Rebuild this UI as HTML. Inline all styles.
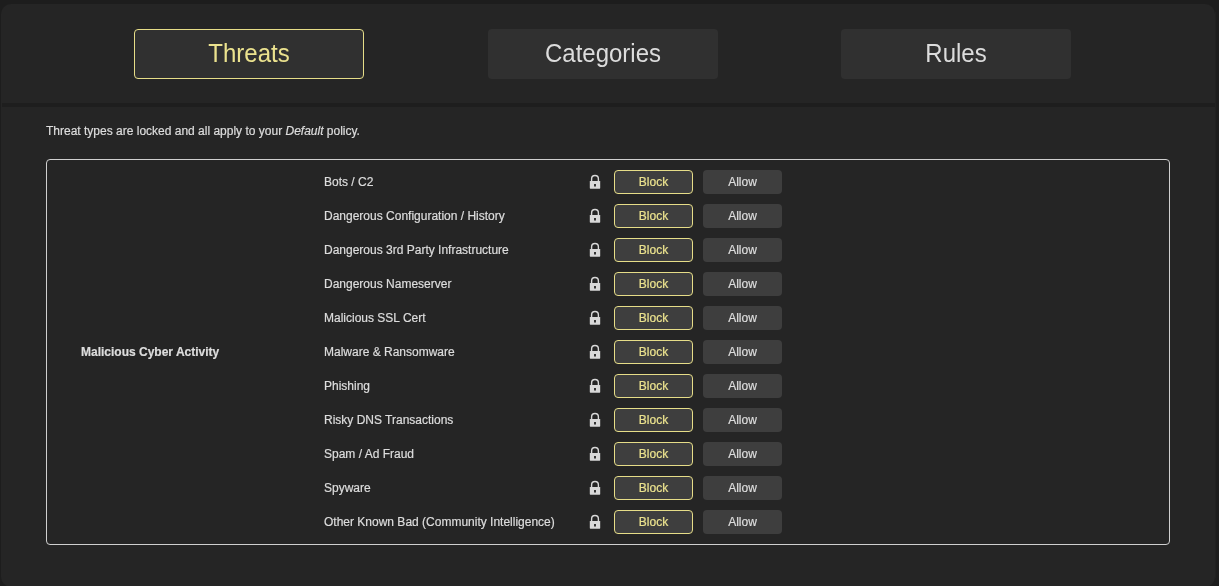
<!DOCTYPE html>
<html><head><meta charset="utf-8"><style>
*{margin:0;padding:0;box-sizing:border-box}
html,body{width:1219px;height:586px;overflow:hidden;background:#1d1d1d}
body{will-change:transform;-webkit-text-stroke:0.2px currentColor;font-family:"Liberation Sans",sans-serif;color:#e0e0e0;position:relative}
.card{position:absolute;left:1px;top:4px;width:1214px;height:583px;background:#252525;border-radius:10px}
.band{position:absolute;left:2px;top:103px;width:1213px;height:4px;background:#1e1e1e}
.tab{position:absolute;top:29px;width:230px;height:50px;background:#303030;border-radius:4px}
.tab span{-webkit-text-stroke:0;position:absolute;left:0;right:0;top:-1px;text-align:center;font-size:25px;line-height:50px;color:#dcdcdc;transform:scaleX(0.96)}
.tab.act{border:1px solid #e6dd88}
.tab.act span{color:#ebe28e;line-height:48px}
.note{position:absolute;left:46px;top:123px;font-size:12px;line-height:16px;color:#dddddd}
.tbl{position:absolute;left:46px;top:159px;width:1124px;height:386px;border:1px solid #d0d0d0;border-radius:4px}
.cat{position:absolute;left:81px;top:344px;font-size:12px;line-height:16px;font-weight:bold;color:#dddddd}
.row{position:absolute;left:0;width:1219px;height:24px}
.lbl{position:absolute;left:324px;top:4px;font-size:12px;line-height:16px;color:#dddddd;white-space:nowrap}
.lk{position:absolute;left:586px;top:2px}
.btn{position:absolute;top:0;width:79px;height:24px;border-radius:4px;background:#3e3e3e;font-size:12px;text-align:center;line-height:24px;color:#dddddd}
.blk{left:614px;border:1px solid #e6dd88;color:#ebe28e;line-height:22px}
.alw{left:703px}
</style></head><body>
<div class="card"></div>
<div class="band"></div>
<div style="position:absolute;left:1215px;top:12px;width:1px;height:566px;background:#212121"></div>
<div class="tab act" style="left:134px"><span>Threats</span></div>
<div class="tab" style="left:488px"><span>Categories</span></div>
<div class="tab" style="left:841px"><span>Rules</span></div>
<div class="note">Threat types are locked and all apply to your <i>Default</i> policy.</div>
<div class="tbl"></div>
<div class="cat">Malicious Cyber Activity</div>
<div class="row" style="top:170px"><span class="lbl">Bots / C2</span><svg class="lk" width="18" height="20" viewBox="0 0 18 20"><path d="M5.6 9.2 V6.9 A3.4 3.4 0 0 1 12.4 6.9 V9.2" fill="none" stroke="#d8d8d8" stroke-width="1.4"/><rect x="3.8" y="9" width="10.4" height="7.7" rx="0.6" fill="#d8d8d8"/><path d="M8.1 12 h1.8 v2.4 h-1.8z" fill="#222"/></svg><div class="btn blk">Block</div><div class="btn alw">Allow</div></div>
<div class="row" style="top:204px"><span class="lbl">Dangerous Configuration / History</span><svg class="lk" width="18" height="20" viewBox="0 0 18 20"><path d="M5.6 9.2 V6.9 A3.4 3.4 0 0 1 12.4 6.9 V9.2" fill="none" stroke="#d8d8d8" stroke-width="1.4"/><rect x="3.8" y="9" width="10.4" height="7.7" rx="0.6" fill="#d8d8d8"/><path d="M8.1 12 h1.8 v2.4 h-1.8z" fill="#222"/></svg><div class="btn blk">Block</div><div class="btn alw">Allow</div></div>
<div class="row" style="top:238px"><span class="lbl">Dangerous 3rd Party Infrastructure</span><svg class="lk" width="18" height="20" viewBox="0 0 18 20"><path d="M5.6 9.2 V6.9 A3.4 3.4 0 0 1 12.4 6.9 V9.2" fill="none" stroke="#d8d8d8" stroke-width="1.4"/><rect x="3.8" y="9" width="10.4" height="7.7" rx="0.6" fill="#d8d8d8"/><path d="M8.1 12 h1.8 v2.4 h-1.8z" fill="#222"/></svg><div class="btn blk">Block</div><div class="btn alw">Allow</div></div>
<div class="row" style="top:272px"><span class="lbl">Dangerous Nameserver</span><svg class="lk" width="18" height="20" viewBox="0 0 18 20"><path d="M5.6 9.2 V6.9 A3.4 3.4 0 0 1 12.4 6.9 V9.2" fill="none" stroke="#d8d8d8" stroke-width="1.4"/><rect x="3.8" y="9" width="10.4" height="7.7" rx="0.6" fill="#d8d8d8"/><path d="M8.1 12 h1.8 v2.4 h-1.8z" fill="#222"/></svg><div class="btn blk">Block</div><div class="btn alw">Allow</div></div>
<div class="row" style="top:306px"><span class="lbl">Malicious SSL Cert</span><svg class="lk" width="18" height="20" viewBox="0 0 18 20"><path d="M5.6 9.2 V6.9 A3.4 3.4 0 0 1 12.4 6.9 V9.2" fill="none" stroke="#d8d8d8" stroke-width="1.4"/><rect x="3.8" y="9" width="10.4" height="7.7" rx="0.6" fill="#d8d8d8"/><path d="M8.1 12 h1.8 v2.4 h-1.8z" fill="#222"/></svg><div class="btn blk">Block</div><div class="btn alw">Allow</div></div>
<div class="row" style="top:340px"><span class="lbl">Malware &amp; Ransomware</span><svg class="lk" width="18" height="20" viewBox="0 0 18 20"><path d="M5.6 9.2 V6.9 A3.4 3.4 0 0 1 12.4 6.9 V9.2" fill="none" stroke="#d8d8d8" stroke-width="1.4"/><rect x="3.8" y="9" width="10.4" height="7.7" rx="0.6" fill="#d8d8d8"/><path d="M8.1 12 h1.8 v2.4 h-1.8z" fill="#222"/></svg><div class="btn blk">Block</div><div class="btn alw">Allow</div></div>
<div class="row" style="top:374px"><span class="lbl">Phishing</span><svg class="lk" width="18" height="20" viewBox="0 0 18 20"><path d="M5.6 9.2 V6.9 A3.4 3.4 0 0 1 12.4 6.9 V9.2" fill="none" stroke="#d8d8d8" stroke-width="1.4"/><rect x="3.8" y="9" width="10.4" height="7.7" rx="0.6" fill="#d8d8d8"/><path d="M8.1 12 h1.8 v2.4 h-1.8z" fill="#222"/></svg><div class="btn blk">Block</div><div class="btn alw">Allow</div></div>
<div class="row" style="top:408px"><span class="lbl">Risky DNS Transactions</span><svg class="lk" width="18" height="20" viewBox="0 0 18 20"><path d="M5.6 9.2 V6.9 A3.4 3.4 0 0 1 12.4 6.9 V9.2" fill="none" stroke="#d8d8d8" stroke-width="1.4"/><rect x="3.8" y="9" width="10.4" height="7.7" rx="0.6" fill="#d8d8d8"/><path d="M8.1 12 h1.8 v2.4 h-1.8z" fill="#222"/></svg><div class="btn blk">Block</div><div class="btn alw">Allow</div></div>
<div class="row" style="top:442px"><span class="lbl">Spam / Ad Fraud</span><svg class="lk" width="18" height="20" viewBox="0 0 18 20"><path d="M5.6 9.2 V6.9 A3.4 3.4 0 0 1 12.4 6.9 V9.2" fill="none" stroke="#d8d8d8" stroke-width="1.4"/><rect x="3.8" y="9" width="10.4" height="7.7" rx="0.6" fill="#d8d8d8"/><path d="M8.1 12 h1.8 v2.4 h-1.8z" fill="#222"/></svg><div class="btn blk">Block</div><div class="btn alw">Allow</div></div>
<div class="row" style="top:476px"><span class="lbl">Spyware</span><svg class="lk" width="18" height="20" viewBox="0 0 18 20"><path d="M5.6 9.2 V6.9 A3.4 3.4 0 0 1 12.4 6.9 V9.2" fill="none" stroke="#d8d8d8" stroke-width="1.4"/><rect x="3.8" y="9" width="10.4" height="7.7" rx="0.6" fill="#d8d8d8"/><path d="M8.1 12 h1.8 v2.4 h-1.8z" fill="#222"/></svg><div class="btn blk">Block</div><div class="btn alw">Allow</div></div>
<div class="row" style="top:510px"><span class="lbl">Other Known Bad (Community Intelligence)</span><svg class="lk" width="18" height="20" viewBox="0 0 18 20"><path d="M5.6 9.2 V6.9 A3.4 3.4 0 0 1 12.4 6.9 V9.2" fill="none" stroke="#d8d8d8" stroke-width="1.4"/><rect x="3.8" y="9" width="10.4" height="7.7" rx="0.6" fill="#d8d8d8"/><path d="M8.1 12 h1.8 v2.4 h-1.8z" fill="#222"/></svg><div class="btn blk">Block</div><div class="btn alw">Allow</div></div>
</body></html>
